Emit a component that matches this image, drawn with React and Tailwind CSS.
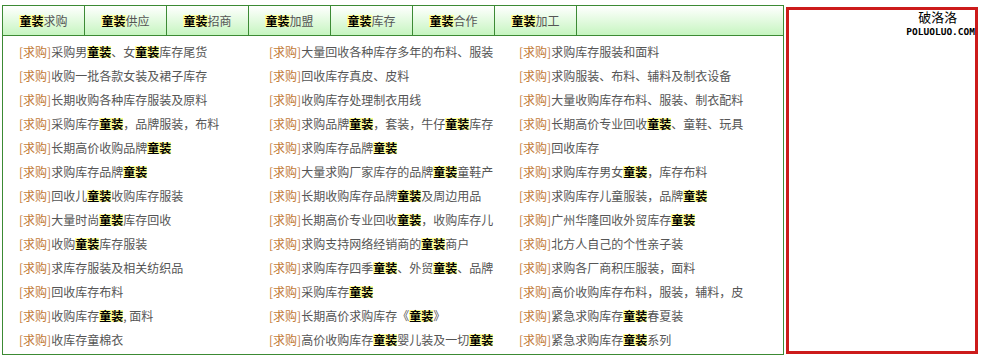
import React from 'react';

const tabs = ['求购', '供应', '招商', '加盟', '库存', '合作', '加工'];

const columns = [
  [
    '采购男童装、女童装库存尾货',
    '收购一批各款女装及裙子库存',
    '长期收购各种库存服装及原料',
    '采购库存童装，品牌服装，布料',
    '长期高价收购品牌童装',
    '求购库存品牌童装',
    '回收儿童装收购库存服装',
    '大量时尚童装库存回收',
    '收购童装库存服装',
    '求库存服装及相关纺织品',
    '回收库存布料',
    '收购库存童装, 面料',
    '收库存童棉衣',
  ],
  [
    '大量回收各种库存多年的布料、服装',
    '回收库存真皮、皮料',
    '收购库存处理制衣用线',
    '求购品牌童装，套装，牛仔童装库存',
    '求购库存品牌童装',
    '大量求购厂家库存的品牌童装童鞋产',
    '长期收购库存品牌童装及周边用品',
    '长期高价专业回收童装，收购库存儿',
    '求购支持网络经销商的童装商户',
    '求购库存四季童装、外贸童装、品牌',
    '采购库存童装',
    '长期高价求购库存《童装》',
    '高价收购库存童装婴儿装及一切童装',
  ],
  [
    '求购库存服装和面料',
    '求购服装、布料、辅料及制衣设备',
    '大量收购库存布料、服装、制衣配料',
    '长期高价专业回收童装、童鞋、玩具',
    '回收库存',
    '求购库存男女童装，库存布料',
    '求购库存儿童服装，品牌童装',
    '广州华隆回收外贸库存童装',
    '北方人自己的个性亲子装',
    '求购各厂商积压服装，面料',
    '高价收购库存布料，服装，辅料，皮',
    '紧急求购库存童装春夏装',
    '紧急求购库存童装系列',
  ],
];

// every 童装 in a title gets the yellow highlight
const Hl = () => <b className="bg-[#ffff99] font-bold text-black">童装</b>;

const Title = ({ text }) => {
  const parts = text.split('童装');
  return (
    <>
      {parts.map((p, i) => (
        <React.Fragment key={i}>
          {i > 0 && <Hl />}
          {p}
        </React.Fragment>
      ))}
    </>
  );
};

const App = () => {
  return (
    <div className="flex items-start bg-white w-[985px] h-[359px] text-[12px] leading-none font-['Noto_Sans_CJK_SC',sans-serif]">
      {/* green list box */}
      <div className="ml-[2px] mt-[5px] w-[782px] h-[350px] border border-[#3c8a34] flex flex-col">
        <div className="flex h-[30px] border-b border-[#3c8a34] bg-linear-to-b from-white to-[#c6f5c0]">
          {tabs.map((t) => (
            <div
              key={t}
              className="w-[82px] border-r border-[#3c8a34] flex items-center justify-center text-[#555]"
            >
              <Hl />
              {t}
            </div>
          ))}
        </div>
        <div className="grid grid-cols-[250px_250px_250px] pl-[16px] pt-[4px]">
          {columns.map((col, ci) => (
            <div key={ci} className="flex flex-col">
              {col.map((item, i) => (
                <div key={i} className="h-[24px] flex items-center whitespace-nowrap text-[#555]">
                  <span className="text-[#c27a36]">[求购]</span>
                  <Title text={item} />
                </div>
              ))}
            </div>
          ))}
        </div>
      </div>

      {/* red ad box */}
      <div className="relative ml-[2px] mt-[7px] w-[192px] h-[347px] border-[3px] border-[#cc1b1b]">
        <div className="absolute right-0 top-0 flex flex-col items-center">
          <span className="text-[13px] leading-[14px] text-black pr-[6px]">破洛洛</span>
          <span className="mt-[2px] bg-white font-['DejaVu_Sans_Mono',monospace] font-bold text-[9.5px] leading-[11px] text-black">
            POLUOLUO.COM
          </span>
        </div>
      </div>
    </div>
  );
};

export default App;
